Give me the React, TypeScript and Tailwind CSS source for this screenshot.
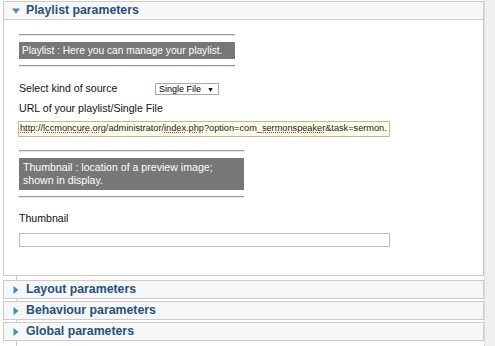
import React from "react";

const Tri = ({ down }: { down?: boolean }) => (
  <svg width="8" height="8" viewBox="0 0 8 8" className="shrink-0">
    {down ? <polygon points="0,1.5 8,1.5 4,6.5" fill="#3d8ec6" /> : <polygon points="1.5,0 6.5,4 1.5,8" fill="#3d8ec6" />}
  </svg>
);

const Header = ({ title, down }: { title: string; down?: boolean }) => (
  <div className="flex items-center h-[19px] bg-[#f7f7f7] border border-[#cccccc] pl-[8px] gap-[6px]">
    <Tri down={down} />
    <span className="text-[12.3px] font-bold text-[#23527f] leading-none">{title}</span>
  </div>
);

const Rule = () => <div className="h-[2px] border-t border-[#999] border-b-[#e5e5e5] border-b w-full" />;

const W = ({ children }: { children: React.ReactNode }) => (
  <span className="underline decoration-dotted decoration-[#e03030] decoration-[1px] underline-offset-[1px]">{children}</span>
);

export default function App() {
  return (
    <div className="w-[495px] h-[346px] bg-[#f0f0f0] flex overflow-hidden" style={{ fontFamily: '"Liberation Sans", Arial, sans-serif' }}>
      <div className="w-[3px] bg-white" />
      <div className="w-[481px] flex flex-col bg-white">
        <div className="h-[1px] bg-white" />
        <Header title="Playlist parameters" down />
        <div className="h-[256px] border-x border-b border-[#cccccc] bg-white pl-[15px] pt-[14px]">
          <div className="w-[216px] flex flex-col gap-[6px]">
            <Rule />
            <div className="bg-[#777777] text-white text-[10.2px] h-[17px] flex items-center pl-[3px] whitespace-nowrap">Playlist : Here you can manage your playlist.</div>
            <Rule />
          </div>
          <div className="flex items-center mt-[14px] h-[16px]">
            <span className="text-[10.6px] text-[#111] w-[136px]">Select kind of source</span>
            <div className="h-[12px] w-[64px] border border-[#aaa] bg-white flex items-center pl-[3px] text-[9px] text-black leading-none whitespace-nowrap">
              Single File <span className="text-[7px] ml-[6px]">▼</span>
            </div>
          </div>
          <div className="text-[10.6px] text-[#111] mt-[3px] h-[16px] leading-[16px]">URL of your playlist/Single File</div>
          <div className="mt-[5px] w-[372px] h-[16px] border border-[#bbbb99] bg-[#fffde6] text-[9.2px] leading-[11px] text-[#222] pl-[1px] pt-[1px] whitespace-nowrap overflow-hidden -ml-[1px]">
            <span>
              <W>http</W>://<W>lccmoncure</W>.<W>org</W>/administrator/<W>index</W>.<W>php</W>?option=com_<W>sermonspeaker</W>&amp;task=sermon.
            </span>
          </div>
          <div className="w-[225px] flex flex-col gap-[6px] mt-[13px]">
            <Rule />
            <div className="bg-[#777777] text-white text-[10.6px] leading-[13px] h-[32px] flex items-center pl-[4px] whitespace-nowrap">
              Thumbnail : location of a preview image;<br />shown in display.
            </div>
            <Rule />
          </div>
          <div className="text-[10.6px] text-[#111] mt-[12px] h-[16px] leading-[16px]">Thumbnail</div>
          <div className="mt-[7px] w-[371px] h-[14px] border border-[#bbbbbb] bg-white" />
        </div>
        <div className="h-[4px] ml-[13px] border-l border-[#cccccc]" />
        <Header title="Layout parameters" />
        <div className="h-[2px] ml-[13px] border-l border-[#cccccc]" />
        <Header title="Behaviour parameters" />
        <div className="h-[2px] ml-[13px] border-l border-[#cccccc]" />
        <Header title="Global parameters" />
        <div className="flex-1 ml-[13px] border-l border-[#cccccc]" />
      </div>
      <div className="w-[11px] bg-[#f0f0f0] border-l border-[#dddddd]" />
    </div>
  );
}
